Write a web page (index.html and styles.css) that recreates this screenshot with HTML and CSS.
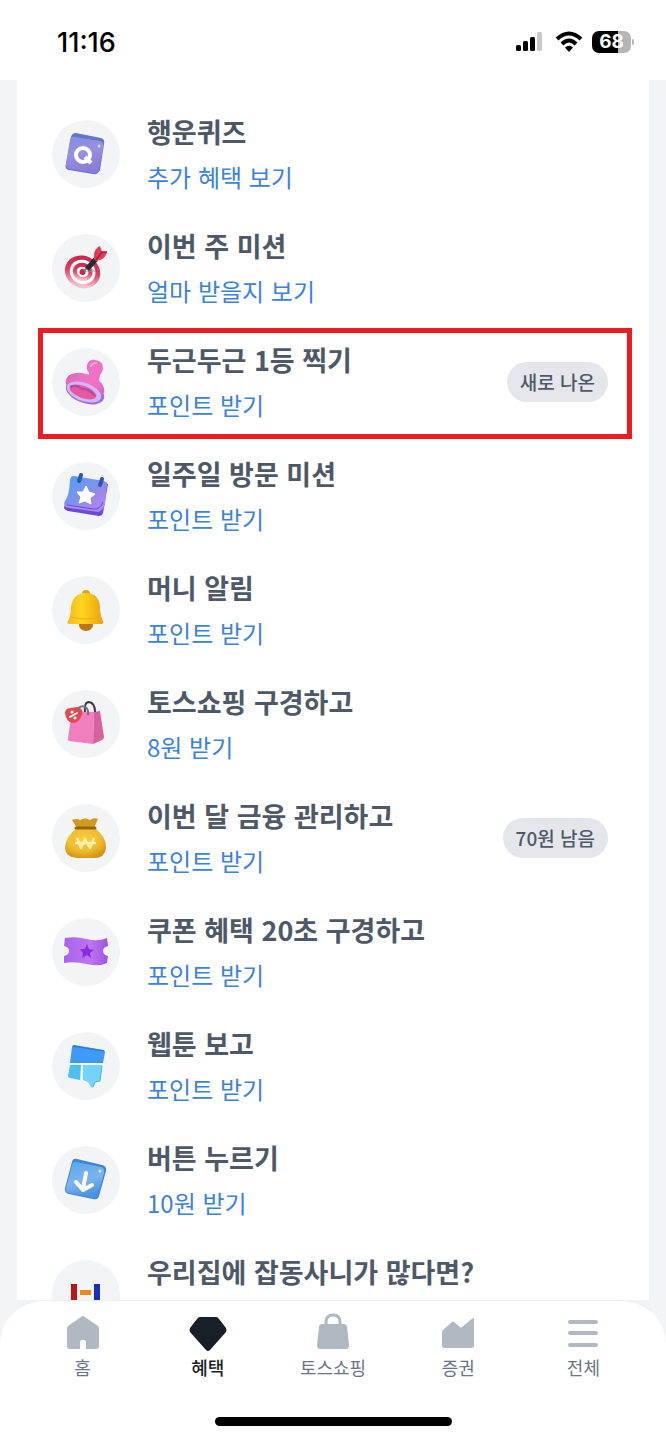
FILE: index.html
```html
<!DOCTYPE html>
<html lang="ko">
<head>
<meta charset="UTF-8">
<meta name="viewport" content="width=device-width, initial-scale=1.0">
<title>혜택</title>
<link rel="stylesheet" href="styles.css">
</head>
<body>

<header class="status-bar">
  <span class="time">11:16</span>
  <div class="status-icons">
    <svg width="30" height="20" viewBox="0 0 30 20" aria-hidden="true">
      <rect x="0" y="13" width="5" height="6" rx="1.5"/>
      <rect x="7" y="9" width="5" height="10" rx="1.5"/>
      <rect x="14" y="5" width="5" height="14" rx="1.5"/>
      <rect x="21" y="0" width="5" height="19" rx="1.5" fill="#c9c9c9"/>
    </svg>
    <svg width="28" height="22" viewBox="0 0 28 22" aria-hidden="true">
      <g fill="none" stroke="#000" stroke-width="4">
        <path d="M2 8 Q14 -3 26 8"/>
        <path d="M7 13 Q14 6 21 13"/>
      </g>
      <path d="M10 16.500 Q14 13 18 16.500 L14 21 Z"/>
    </svg>
    <div class="battery"><span>68</span></div>
  </div>
</header>

<main class="content">
  <ul class="benefit-list">
    <li>
      <a class="row" href="#">
        <svg class="row-icon" viewBox="0 0 68 68" aria-hidden="true">
          <defs><linearGradient id="quiz" x1="0" y1="0" x2="0.300" y2="1"><stop offset="0" stop-color="#7f8fe0"/><stop offset="0.500" stop-color="#9a8fe2"/><stop offset="1" stop-color="#8c7cd6"/></linearGradient></defs>
          <path d="M24 13 L49 18 Q53 19 52 24 L48 50 Q46 55 41 54 L17 50 Q12 49 14 44 L19 17 Q20 13 24 13Z" fill="#5f78cd"/>
          <path d="M23 17 L48 21 Q52 22 51 27 L47 50 Q46 54 41 53 L18 49 Q13 48 14 44 L18 20 Q19 16 23 17Z" fill="url(#quiz)"/>
          <circle cx="31" cy="35" r="7" fill="none" stroke="#fff" stroke-width="4"/>
          <path d="M33 37 L39 43" stroke="#fff" stroke-width="4"/>
          <circle cx="47" cy="26" r="1.500" fill="#d3dcff"/>
        </svg>
        <span class="row-text"><strong>행운퀴즈</strong><span>추가 혜택 보기</span></span>
      </a>
    </li>
    <li>
      <a class="row" href="#">
        <svg class="row-icon" viewBox="0 0 68 68" aria-hidden="true">
          <defs><linearGradient id="ring" x1="0" y1="0" x2="0.300" y2="1"><stop offset="0" stop-color="#c81f45"/><stop offset="0.600" stop-color="#dc3f60"/><stop offset="1" stop-color="#f3c3cc"/></linearGradient></defs>
          <g transform="rotate(25 31 37)">
            <ellipse cx="31" cy="38" rx="18" ry="16" fill="url(#ring)"/>
            <ellipse cx="31" cy="38" rx="13" ry="12" fill="#fff"/>
            <ellipse cx="31" cy="38" rx="10" ry="9" fill="url(#ring)"/>
            <ellipse cx="31" cy="38" rx="6" ry="5" fill="#fff"/>
            <ellipse cx="31" cy="38" rx="3" ry="3" fill="#d1254b"/>
          </g>
          <path d="M33 38 L44 38 L40 34Z" fill="#8f8a93" opacity="0.500"/>
          <path d="M32 37 L35 34" stroke="#777" stroke-width="2"/>
          <path d="M35 35 L44 25" stroke="#2b2a30" stroke-width="5"/>
          <path d="M42 25 Q41 15 48 12 L50 18 L55 18 Q53 26 44 27Z" fill="#e23a58"/>
          <path d="M44 26 L50 18 L55 18" fill="none" stroke="#a51d3c" stroke-width="1.500"/>
        </svg>
        <span class="row-text"><strong>이번 주 미션</strong><span>얼마 받을지 보기</span></span>
      </a>
    </li>
    <li class="highlight">
      <a class="row" href="#">
        <svg class="row-icon" viewBox="0 0 68 68" aria-hidden="true">
          <defs><linearGradient id="stamp" x1="0" y1="0" x2="1" y2="0.300"><stop offset="0" stop-color="#d765bd"/><stop offset="0.600" stop-color="#f47ac6"/><stop offset="1" stop-color="#e064bd"/></linearGradient></defs>
          <ellipse cx="33" cy="44" rx="20" ry="11" transform="rotate(20 33 44)" fill="#9f6be0"/>
          <ellipse cx="33" cy="38" rx="20" ry="12" transform="rotate(20 33 38)" fill="url(#stamp)"/>
          <path d="M27 31 Q38 30 37 25 Q34 21 35 17 Q37 11 43 12 Q52 13 51 21 Q50 25 48 27 Q46 33 49 40Z" fill="#f070c3"/>
          <path d="M39 18 Q40 15 44 15" stroke="#fbaadd" stroke-width="2" fill="none" stroke-linecap="round"/>
          <ellipse cx="32" cy="44" rx="18" ry="9" transform="rotate(20 32 44)" fill="#cdb8f3"/>
          <ellipse cx="31" cy="44" rx="14" ry="6" transform="rotate(20 31 44)" fill="#e8589f"/>
          <path d="M18 39 Q24 36 30 41 Q37 40 43 48" fill="none" stroke="#b04ba6" stroke-width="2"/>
        </svg>
        <span class="row-text"><strong>두근두근 1등 찍기</strong><span>포인트 받기</span></span>
        <span class="badge">새로 나온</span>
      </a>
    </li>
    <li>
      <a class="row" href="#">
        <svg class="row-icon" viewBox="0 0 68 68" aria-hidden="true">
          <defs><linearGradient id="cal" x1="0" y1="0" x2="1" y2="1"><stop offset="0" stop-color="#4aa0f8"/><stop offset="0.500" stop-color="#7e92ee"/><stop offset="1" stop-color="#c77ce8"/></linearGradient></defs>
          <path d="M15 38 L12 45 Q12 48 16 49 L47 54 Q50 54 51 51 L56 22 L51 20Z" fill="#7048d6"/>
          <path d="M15 36 L12 42 Q13 46 18 46 L46 50 Q51 49 53 42 L55 20Z" fill="#a98bf0"/>
          <path d="M22 14 L52 19 Q55 20 55 23 L51 40 Q48 48 41 47 L15 43 Q11 42 13 39 Q17 35 18 19 Q18 14 22 14Z" fill="url(#cal)"/>
          <path d="M15 43 L41 47 Q48 48 51 40" fill="none" stroke="#6650d0" stroke-width="1"/>
          <path d="M29 13 L27 19 M50 17 L48 23" stroke="#245bb0" stroke-width="4" stroke-linecap="round"/>
          <path d="M34 24 L37 30 L43 32 L38 36 L39 42 L33 39 L27 41 L29 35 L25 30 L31 30Z" fill="#fff" stroke="#fff" stroke-width="1" stroke-linejoin="round"/>
        </svg>
        <span class="row-text"><strong>일주일 방문 미션</strong><span>포인트 받기</span></span>
      </a>
    </li>
    <li>
      <a class="row" href="#">
        <svg class="row-icon" viewBox="0 0 68 68" aria-hidden="true">
          <defs><linearGradient id="bell"><stop offset="0" stop-color="#f4b916"/><stop offset="0.400" stop-color="#ffd61f"/><stop offset="1" stop-color="#e9a211"/></linearGradient></defs>
          <ellipse cx="34" cy="49" rx="7" ry="6" fill="#b97612"/>
          <ellipse cx="34" cy="18" rx="4" ry="4" fill="#e0a30f"/>
          <path d="M34 17 Q47 17 48 31 Q48 39 51 45 Q52 48 49 48 L18 48 Q14 48 16 45 Q19 40 19 31 Q21 17 34 17Z" fill="url(#bell)"/>
          <path d="M19 41 Q34 45 49 41" fill="none" stroke="#eaae12" stroke-width="1"/>
        </svg>
        <span class="row-text"><strong>머니 알림</strong><span>포인트 받기</span></span>
      </a>
    </li>
    <li>
      <a class="row" href="#">
        <svg class="row-icon" viewBox="0 0 68 68" aria-hidden="true">
          <path d="M20 21 L42 22 L41 54 L17 51 Q15 50 16 48Z" fill="#f07fc0"/>
          <path d="M42 22 L48 21 L52 47 Q52 49 50 50 L41 54Z" fill="#d9609f"/>
          <path d="M33 22 Q32 12 37 12 Q43 13 43 22" fill="none" stroke="#3a3740" stroke-width="2"/>
          <path d="M13 23 Q13 19 18 18 L26 17 Q32 19 30 25 Q26 34 20 33 Q14 31 13 23Z" fill="#e34a50"/>
          <path d="M26 19 Q29 15 33 17 Q37 19 36 25" fill="none" stroke="#77737d" stroke-width="2"/>
          <path d="M18 27 L25 23" stroke="#fff" stroke-width="2" stroke-linecap="round"/>
          <circle cx="20" cy="22" r="1.500" fill="#fff"/>
          <circle cx="23" cy="28" r="1.500" fill="#fff"/>
        </svg>
        <span class="row-text"><strong>토스쇼핑 구경하고</strong><span>8원 받기</span></span>
      </a>
    </li>
    <li>
      <a class="row" href="#">
        <svg class="row-icon" viewBox="0 0 68 68" aria-hidden="true">
          <defs><radialGradient id="money" cx="0.450" cy="0.350" r="0.700"><stop offset="0" stop-color="#f6ce45"/><stop offset="0.600" stop-color="#efbb2d"/><stop offset="1" stop-color="#cd9118"/></radialGradient></defs>
          <path d="M25 24 L20 16 Q24 14 28 16 Q33 13 38 16 Q42 13 46 15 L42 24Z" fill="#d19a1e"/>
          <path d="M25 24 L43 24 Q55 34 54 44 Q53 54 42 54 L25 54 Q13 53 13 43 Q14 32 25 24Z" fill="url(#money)"/>
          <path d="M24 24 L43 24" stroke="#9c6410" stroke-width="3" stroke-linecap="round"/>
          <path d="M25 34 L29 44 L33 35 L38 44 L42 34 M23 39 L44 39" fill="none" stroke="#fff0a8" stroke-width="2.500" stroke-linejoin="round"/>
        </svg>
        <span class="row-text"><strong>이번 달 금융 관리하고</strong><span>포인트 받기</span></span>
        <span class="badge">70원 남음</span>
      </a>
    </li>
    <li>
      <a class="row" href="#">
        <svg class="row-icon" viewBox="0 0 68 68" aria-hidden="true">
          <defs><linearGradient id="ticket"><stop offset="0" stop-color="#a962ea"/><stop offset="0.600" stop-color="#bb75f2"/><stop offset="1" stop-color="#a052e2"/></linearGradient></defs>
          <path d="M13 20 Q24 18 34 21 Q46 24 55 20 L56 28 Q51 29 51 33 Q51 37 56 38 L55 45 Q47 49 35 46 Q22 43 12 45 L12 38 Q17 37 17 33 Q17 29 12 28Z" fill="url(#ticket)"/>
          <path d="M35 26 L37 31 L42 32 L38 35 L39 40 L35 37 L30 40 L31 35 L28 31 L33 31Z" fill="#8a2bdc"/>
        </svg>
        <span class="row-text"><strong>쿠폰 혜택 20초 구경하고</strong><span>포인트 받기</span></span>
      </a>
    </li>
    <li>
      <a class="row" href="#">
        <svg class="row-icon" viewBox="0 0 68 68" aria-hidden="true">
          <path d="M22 13 L51 18 Q53 18 53 20 L51 31 L18 31 L20 15 Q20 13 22 13Z" fill="#3f9af6"/>
          <path d="M21 14 L52 19" stroke="#2a7ee0" stroke-width="1.500"/>
          <path d="M18 33 L29 33 L28 48 L18 46 Q16 46 16 44Z" fill="#4cc0f3"/>
          <path d="M31 33 L50 33 L48 48 Q48 50 46 50 L43 50 L41 55 Q40 57 39 55 L36 50 L31 48Z" fill="#73d3fb"/>
          <path d="M50 34 L48 49 L43 50 L41 55" fill="none" stroke="#48b4e8" stroke-width="1"/>
        </svg>
        <span class="row-text"><strong>웹툰 보고</strong><span>포인트 받기</span></span>
      </a>
    </li>
    <li>
      <a class="row" href="#">
        <svg class="row-icon" viewBox="0 0 68 68" aria-hidden="true">
          <defs><linearGradient id="press" x1="0" y1="0" x2="0.300" y2="1"><stop offset="0" stop-color="#5aa5e8"/><stop offset="0.600" stop-color="#7cb5ee"/><stop offset="1" stop-color="#4a92e0"/></linearGradient></defs>
          <path d="M25 13 L50 19 Q55 20 54 25 L47 50 Q46 54 41 53 L17 48 Q12 47 13 42 L20 16 Q21 12 25 13Z" fill="#3c86d2"/>
          <path d="M24 16 L49 21 Q53 22 52 27 L46 49 Q45 53 40 52 L17 47 Q13 46 14 42 L20 19 Q21 15 24 16Z" fill="url(#press)"/>
          <path d="M34 27 L31 43 M24 36 L31 44 L40 39" fill="none" stroke="#fff" stroke-width="4" stroke-linecap="round" stroke-linejoin="round"/>
          <circle cx="48" cy="25" r="1.500" fill="#d6ecff"/>
        </svg>
        <span class="row-text"><strong>버튼 누르기</strong><span>10원 받기</span></span>
      </a>
    </li>
    <li>
      <a class="row" href="#">
        <svg class="row-icon" viewBox="0 0 68 68" aria-hidden="true">
          <rect x="19" y="24" width="6" height="20" fill="#bd1418"/>
          <rect x="28" y="30" width="11" height="5" fill="#f08a1d"/>
          <rect x="42" y="24" width="6" height="20" fill="#1a2fc0"/>
        </svg>
        <span class="row-text"><strong>우리집에 잡동사니가 많다면?</strong></span>
      </a>
    </li>
  </ul>
</main>

<nav class="tab-bar">
  <div class="tabs">
    <a class="tab" href="#">
      <svg viewBox="0 0 40 40" aria-hidden="true"><path d="M18 4 Q20 2 22 4 L35 13 Q36 14 36 16 L36 33 Q36 36 33 36 L23 36 L23 29 Q23 27 21 27 L19 27 Q17 27 17 29 L17 36 L7 36 Q4 36 4 33 L4 16 Q4 14 5 13Z"/></svg>
      <span>홈</span>
    </a>
    <a class="tab active" href="#">
      <svg viewBox="0 0 40 40" aria-hidden="true"><path d="M12 4 L28 4 Q30 4 31 6 L38 15 Q39 17 38 19 L22 37 Q20 39 18 37 L2 19 Q1 17 2 15 L9 6 Q10 4 12 4Z"/></svg>
      <span>혜택</span>
    </a>
    <a class="tab" href="#">
      <svg viewBox="0 0 40 40" aria-hidden="true"><path d="M13 13 L13 9 Q13 2 20 2 Q27 2 27 9 L27 13" fill="none" stroke="#b0b8c1" stroke-width="3"/><path d="M9 11 L31 11 Q33 11 34 13 L36 32 Q36 36 33 36 L7 36 Q4 36 4 32 L6 13 Q7 11 9 11Z"/></svg>
      <span>토스쇼핑</span>
    </a>
    <a class="tab" href="#">
      <svg viewBox="0 0 40 40" aria-hidden="true"><path d="M5 17 L14 9 Q15 8 16 9 L22 14 Q23 15 24 14 L35 5 Q36 4 36 6 L36 32 Q36 35 33 35 L7 35 Q4 35 4 32 L4 19 Q4 18 5 17Z"/></svg>
      <span>증권</span>
    </a>
    <a class="tab" href="#">
      <svg viewBox="0 0 40 40" aria-hidden="true"><path d="M7 9 L33 9 M7 20 L33 20 M7 32 L33 32" stroke="#b0b8c1" stroke-width="4" stroke-linecap="round"/></svg>
      <span>전체</span>
    </a>
  </div>
  <div class="home-indicator"></div>
</nav>

</body>
</html>
```

FILE: styles.css
```css
* {
  box-sizing: border-box;
}

body {
  margin: 0;
  height: 100vh;
  display: flex;
  flex-direction: column;
  overflow: hidden;
  background: #f2f4f6;
  font-family: "Noto Sans CJK KR", sans-serif;
  color: #4e5968;
}

a {
  color: inherit;
  text-decoration: none;
}

/* status bar */
.status-bar {
  flex: none;
  height: 80px;
  padding: 4px 35px 0 57px;
  display: flex;
  align-items: center;
  justify-content: space-between;
  background: #fff;
  color: #000;
  font-family: Inter, sans-serif;
}

.time {
  font-size: 27px;
  font-weight: 500;
}

.status-icons {
  display: flex;
  align-items: center;
  gap: 9px;
}

.battery {
  position: relative;
  width: 39px;
  height: 22px;
  border-radius: 7px;
  background: linear-gradient(to right, #000 66%, #b5b5b5 66%);
  color: #fff;
  font-size: 19px;
  font-weight: 700;
  line-height: 22px;
  text-align: center;
}

.battery::after {
  content: "";
  position: absolute;
  top: 8px;
  right: -3px;
  width: 2px;
  height: 6px;
  border-radius: 0 2px 2px 0;
  background: #b5b5b5;
}

/* list */
.content {
  flex: 1;
  min-height: 0;
  margin: 0 17px;
  padding-top: 17px;
  overflow: hidden;
  background: #fff;
}

.benefit-list {
  margin: 0 17px 0 21px;
  padding: 0;
  list-style: none;
}

.row {
  display: flex;
  align-items: center;
  height: 114px;
  padding: 0 24px 0 14px;
}

.row-icon {
  flex: none;
  width: 68px;
  height: 68px;
  margin-right: 27px;
  border-radius: 50%;
  background: #f2f4f6;
}

.row-text {
  flex: 1;
  min-height: 92px;
  padding-top: 2px;
  display: flex;
  flex-direction: column;
  font-size: 24px;
  line-height: 46px;
  color: #3b82de;
  white-space: nowrap;
}

.row-text strong {
  font-size: 27px;
  font-weight: 700;
  line-height: 44px;
  color: #4e5968;
}

.badge {
  padding: 0 13px;
  border-radius: 20px;
  background: #e5e6eb;
  font-size: 19px;
  font-weight: 500;
  line-height: 40px;
}

.highlight {
  position: relative;
}

.highlight::after {
  content: "";
  position: absolute;
  inset: 3px 0 0;
  border: 5px solid #ed1c24;
  pointer-events: none;
}

/* bottom tabs */
.tab-bar {
  flex: none;
  height: 140px;
  padding: 12px 20px 14px;
  display: flex;
  flex-direction: column;
  justify-content: space-between;
  align-items: center;
  border-top: 1px solid #eceef0;
  border-radius: 44px 44px 0 0;
  background: #fff;
}

.tabs {
  width: 100%;
  display: flex;
}

.tab {
  flex: 1;
  display: flex;
  flex-direction: column;
  align-items: center;
  gap: 2px;
  font-size: 18px;
  line-height: 24px;
  color: #6b7684;
}

.tab svg {
  width: 40px;
  height: 40px;
  fill: #b0b8c1;
}

.tab.active {
  color: #191f28;
  font-weight: 500;
}

.tab.active svg {
  fill: #191f28;
}

.home-indicator {
  width: 237px;
  height: 9px;
  border-radius: 5px;
  background: #000;
}
```
